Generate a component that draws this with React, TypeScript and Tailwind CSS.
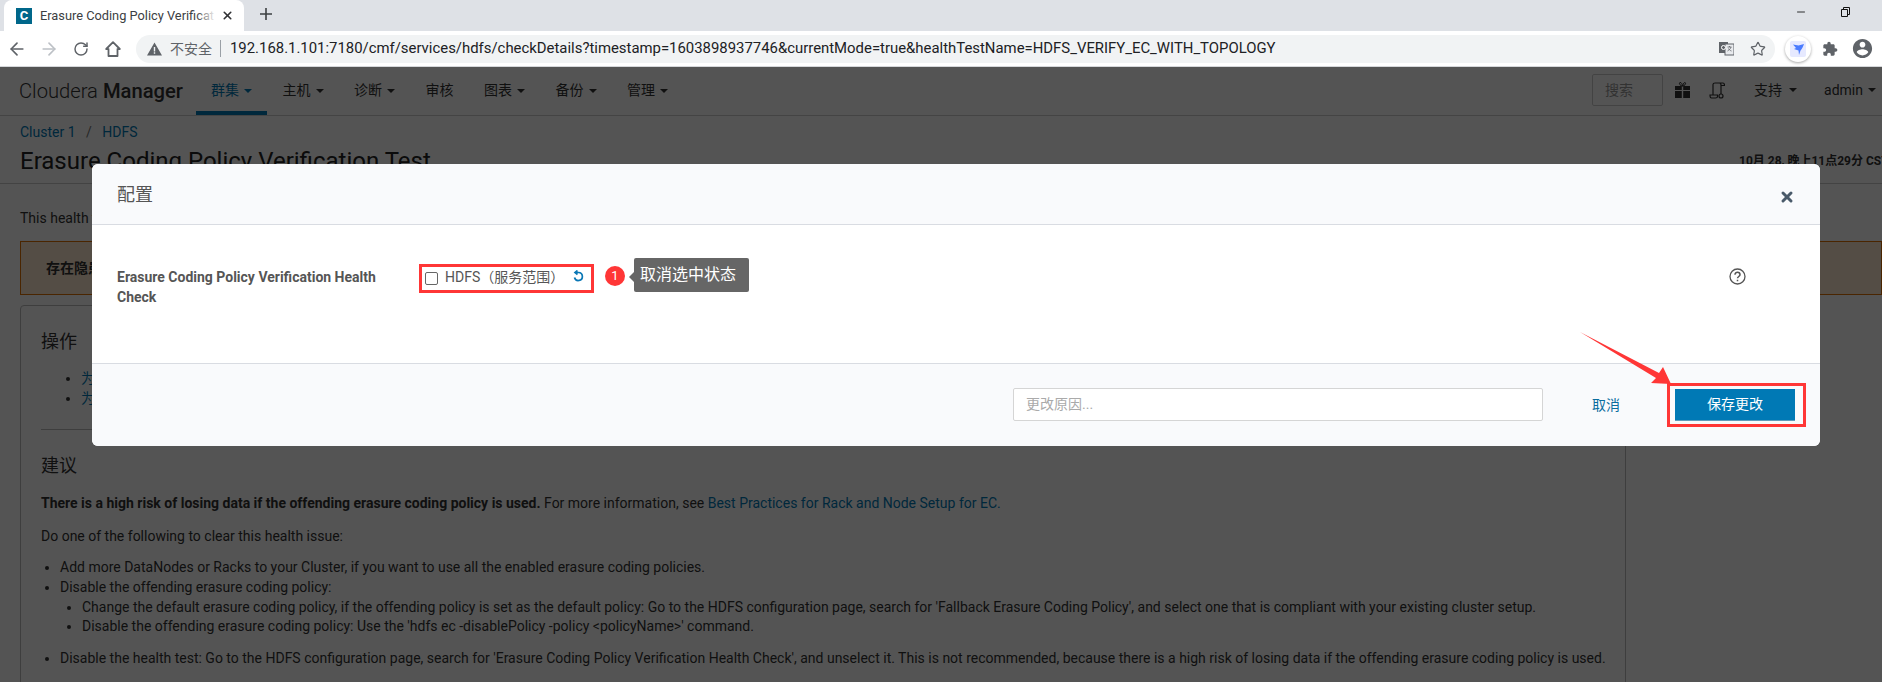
import { ArrowLeft, ArrowRight, RotateCw, Star, Minus, X } from 'lucide-react';

const navItems = [
  { label: '群集', active: true, caret: true },
  { label: '主机', caret: true },
  { label: '诊断', caret: true },
  { label: '审核', caret: false },
  { label: '图表', caret: true },
  { label: '备份', caret: true },
  { label: '管理', caret: true },
];

function Caret() {
  return <span className="ml-[5px] inline-block h-0 w-0 border-x-[4px] border-t-[4px] border-x-transparent border-t-current" />;
}

function TabStrip() {
  return (
    <div className="flex h-[31px] items-end bg-[#dee1e6] pl-[4px] text-[#3c4043]">
      <div className="flex h-[31px] w-[240px] items-center rounded-t-[8px] bg-white pl-[12px]">
        <span className="flex h-[16px] w-[16px] items-center justify-center bg-[#00678a] text-[13px] font-bold leading-none text-white">C</span>
        <div className="relative ml-[8px] w-[176px] overflow-hidden whitespace-nowrap text-[12.800px]">
          Erasure Coding Policy Verificat
          <span className="absolute inset-y-0 right-0 w-[20px] bg-gradient-to-r from-transparent to-white" />
        </div>
        <X size={13} strokeWidth={3} className="ml-[5px] text-[#303134]" />
      </div>
      <svg width="14" height="14" viewBox="0 0 14 14" className="mb-[10px] ml-[15px]">
        <path d="M7 1v12M1 7h12" stroke="#3c4043" strokeWidth="1.6" />
      </svg>
      <Minus size={12} strokeWidth={1.6} className="mb-[13px] ml-auto text-black" />
      <svg width="12" height="12" viewBox="0 0 12 12" fill="none" stroke="#111" className="mb-[13px] ml-[33px] mr-[30px]">
        <path d="M1.500 3.500h6v7h-6zM3.500 3.500v-2h6v7h-2" />
      </svg>
    </div>
  );
}

function Toolbar() {
  return (
    <div className="flex h-[36px] items-center border-b border-[#d5d7da] bg-white text-[#5f6368]">
      <div className="flex w-[136px] items-center pl-[1px]">
        <span className="flex w-[32px] justify-center"><ArrowLeft size={20} strokeWidth={2} /></span>
        <span className="flex w-[32px] justify-center text-[#bdc1c6]"><ArrowRight size={20} strokeWidth={2} /></span>
        <span className="flex w-[32px] justify-center"><RotateCw size={16} strokeWidth={2.2} /></span>
        <span className="flex w-[32px] justify-center">
          <svg width="18" height="18" viewBox="0 0 18 18" fill="none" stroke="#5f6368" strokeWidth="1.8">
            <path d="M9 2.200 2.200 9h2.300v7h9V9h2.300z" strokeLinejoin="round" />
          </svg>
        </span>
      </div>
      <div className="flex h-[28px] w-[1639px] items-center rounded-full bg-[#f1f3f4] pl-[11px] text-[14px]">
        <svg width="15" height="14" viewBox="0 0 15 14" fill="#5f6368">
          <path d="M7.500 0.500 15 13.500H0zM6.800 5v4.500h1.400V5zM6.800 10.300v1.400h1.400v-1.400z" fillRule="evenodd" />
        </svg>
        <span className="ml-[8px] w-[42px] font-['Noto_Sans_CJK_SC',sans-serif] text-[#5f6368]">不安全</span>
        <span className="ml-[8px] h-[17px] w-px bg-[#9aa0a6]" />
        <span className="ml-[9px] whitespace-nowrap text-[14.900px] text-[#202124]">192.168.1.101:7180/cmf/services/hdfs/checkDetails?timestamp=1603898937746&amp;currentMode=true&amp;healthTestName=HDFS_VERIFY_EC_WITH_TOPOLOGY</span>
        <svg width="15" height="15" viewBox="0 0 15 15" className="ml-auto">
          <rect x="0" y="1" width="9" height="11" fill="#5f6368" />
          <rect x="6" y="3" width="9" height="11" fill="#e8eaed" stroke="#5f6368" />
          <path d="M8.500 6h4M10.500 5v1M12 6c-.5 2-2 3-3.500 4M9.500 7.500c.5 1.200 1.500 2 3 2.500" stroke="#5f6368" fill="none" strokeWidth=".8" />
          <circle cx="4.500" cy="6.500" r="2" fill="none" stroke="#fff" />
        </svg>
        <Star size={16} strokeWidth={1.8} className="ml-[16px] mr-[9px] text-[#5f6368]" />
      </div>
      <span className="ml-[10px] flex h-[26px] w-[26px] items-center justify-center rounded-full bg-white shadow-[0_1px_3px_rgba(0,0,0,0.35)]">
        <svg width="16" height="16" viewBox="0 0 16 16">
          <rect width="16" height="16" rx="2" fill="#e6e9ff" />
          <path d="M14 3 8.500 4.500 3 3.500l3 3.500-2 1 4.500 1.500L9 14l1.500-4.500C12 8 13 6 14 3z" fill="#4a7bff" />
        </svg>
      </span>
      <svg width="16" height="16" viewBox="0 0 24 24" fill="#5f6368" className="ml-[11px]">
        <path d="M20.500 11H19V7c0-1.100-.9-2-2-2h-4V3.500C13 2.120 11.880 1 10.500 1S8 2.120 8 3.500V5H4c-1.100 0-1.990.9-1.990 2v3.800H3.500c1.490 0 2.700 1.210 2.700 2.700s-1.210 2.700-2.700 2.700H2V20c0 1.100.9 2 2 2h3.800v-1.500c0-1.490 1.210-2.700 2.700-2.700 1.490 0 2.700 1.210 2.700 2.700V22H17c1.100 0 2-.9 2-2v-4h1.500c1.380 0 2.500-1.120 2.500-2.500S21.880 11 20.500 11z" />
      </svg>
      <svg width="23" height="23" viewBox="0 0 24 24" fill="#5f6368" className="ml-[13px]">
        <path d="M12 2C6.480 2 2 6.480 2 12s4.480 10 10 10 10-4.480 10-10S17.520 2 12 2zm0 3c1.660 0 3 1.340 3 3s-1.340 3-3 3-3-1.340-3-3 1.340-3 3-3zm0 14.200c-2.500 0-4.710-1.280-6-3.220.03-1.990 4-3.080 6-3.080 1.990 0 5.970 1.090 6 3.080-1.290 1.940-3.500 3.220-6 3.220z" />
      </svg>
    </div>
  );
}

function TopNav() {
  return (
    <div className="flex h-[49px] items-stretch border-b border-[#cfcfcf] bg-white pl-[19px] text-[#333]">
      <div className="flex w-[177px] items-center whitespace-nowrap text-[20.200px] font-light">
        Cloudera<span className="ml-[5px] font-medium">Manager</span>
      </div>
      {navItems.map((item) => (
        <div
          key={item.label}
          className={`mr-[0.5px] flex items-center border-b-[4px] px-[15px] pt-[3px] text-[14px] ${item.active ? 'border-[#0079b5] text-[#0079b5]' : 'border-transparent'}`}
        >
          {item.label}
          {item.caret && <Caret />}
        </div>
      ))}
      <div className="ml-auto flex items-center pb-[2px] text-[14px]">
        <div className="flex h-[32px] w-[71px] items-center rounded-[2px] border border-[#ccc] pl-[12px] text-[#999]">搜索</div>
        <svg width="15" height="16" viewBox="0 0 15 16" fill="#333" className="ml-[12px]">
          <path d="M0 4h6.800v4H0zM8.200 4H15v4H8.200zM0 9h6.800v7H0zM8.200 9H15v7H8.200z" />
          <path d="M7.500 4C5 4 3.500 1 5 .5S7.500 3 7.500 4s1-4 2.500-3.500S10 4 7.500 4z" fill="none" stroke="#333" />
        </svg>
        <svg width="16" height="17" viewBox="0 0 16 17" fill="none" stroke="#333" strokeWidth="1.200" className="ml-[19px]">
          <path d="M4 13V2.500C4 1.500 5 1 6 1h8c1 0 1.500 1 1.500 2.500H12M12 12V3c0-1-.5-2-2-2M1 13h7.500v1.500c0 1-1 1.500-2 1.500H2.500C1.500 16 1 15 1 13z" />
          <circle cx="12" cy="14" r="2" />
        </svg>
        <span className="ml-[29px] flex items-center">支持<span className="ml-[2px] flex"><Caret /></span></span>
        <span className="ml-[27px] mr-[6px] flex items-center">admin<Caret /></span>
      </div>
    </div>
  );
}

function PageBody() {
  return (
    <div className="text-[14px] text-[#333]">
      <div className="flex h-[68px] flex-col border-b border-[#ccc] px-[20px] pt-[7px]">
        <div className="flex h-[18px] items-center text-[#0079b5]">
          Cluster 1<span className="mx-[10.500px] text-[#777]">/</span>HDFS
        </div>
        <div className="flex items-start justify-between">
          <h1 className="mt-[4px] text-[24px] leading-[32px] text-[#222]">Erasure Coding Policy Verification Test</h1>
          <span className="mr-[-20px] mt-[12px] w-[143px] overflow-hidden whitespace-nowrap text-[12px] font-bold leading-[16px]">10月 28, 晚上11点29分 CST</span>
        </div>
      </div>
      <p className="ml-[20px] mt-[25px] leading-[18px]">This health test checks the erasure coding policy.</p>
      <div className="ml-[20px] mt-[14px] flex h-[54px] items-center border border-[#e07000] bg-[#ffe8d2] pl-[25px] font-bold">
        存在隐患
      </div>
      <div className="ml-[20px] mt-[10px] h-[400px] w-[1606px] rounded-t-[4px] border border-[#bbb] px-[20px] pt-[24px]">
        <h2 className="text-[18px] leading-[24px]">操作</h2>
        <ul className="ml-[40px] mt-[15px] list-disc leading-[19.500px] text-[#0079b5] marker:text-[#333]">
          <li>为此服务禁用运行状况测试</li>
          <li>为此服务配置运行状况测试</li>
        </ul>
        <hr className="mt-[21px] border-[#bbb]" />
        <h2 className="mt-[24px] text-[18px] leading-[24px]">建议</h2>
        <p className="mt-[15px] leading-[20px]">
          <b>There is a high risk of losing data if the offending erasure coding policy is used.</b> For more information, see{' '}
          <span className="text-[#0079b5]">Best Practices for Rack and Node Setup for EC.</span>
        </p>
        <p className="mt-[13px] leading-[20px]">Do one of the following to clear this health issue:</p>
        <ul className="ml-[19px] mt-[12px] list-disc leading-[19.800px]">
          <li>Add more DataNodes or Racks to your Cluster, if you want to use all the enabled erasure coding policies.</li>
          <li>
            Disable the offending erasure coding policy:
            <ul className="ml-[22px] list-disc">
              <li>Change the default erasure coding policy, if the offending policy is set as the default policy: Go to the HDFS configuration page, search for 'Fallback Erasure Coding Policy', and select one that is compliant with your existing cluster setup.</li>
              <li>Disable the offending erasure coding policy: Use the 'hdfs ec -disablePolicy -policy &lt;policyName&gt;' command.</li>
            </ul>
          </li>
          <li className="mt-[12px] whitespace-nowrap">Disable the health test: Go to the HDFS configuration page, search for 'Erasure Coding Policy Verification Health Check', and unselect it. This is not recommended, because there is a high risk of losing data if the offending erasure coding policy is used.</li>
        </ul>
      </div>
    </div>
  );
}

function ConfigModal() {
  return (
    <div className="absolute left-[92px] top-[97px] flex h-[282px] w-[1728px] flex-col overflow-hidden rounded-[6px] bg-white text-[14px] text-[#333]">
      <div className="flex h-[61px] items-center justify-between border-b border-[#d9dce2] bg-[#f9fafc] pl-[25px] pr-[25px]">
        <span className="text-[18px] text-[#555]">配置</span>
        <X size={16} strokeWidth={4.500} className="mt-[6px] text-[#4a5a6a]" />
      </div>
      <div className="flex flex-1 items-start pl-[25px] pr-[74px] pt-[39px]">
        <div className="mt-[3px] w-[302px] font-bold leading-[20px] text-[#555]">
          Erasure Coding Policy Verification Health
          <br />
          Check
        </div>
        <div className="flex h-[29px] w-[175px] items-center border-[3px] border-[#ff3636] pl-[3px] text-[#555]">
          <span className="h-[13px] w-[13px] rounded-[2px] border border-[#666] bg-white" />
          <span className="mb-[2px] ml-[7px] whitespace-nowrap">HDFS（服务范围）</span>
          <svg width="13" height="13" viewBox="0 0 13 13" fill="none" stroke="#0a77b5" strokeWidth="1.700" className="mb-[5px] ml-[8px]">
            <path d="M3.500 2.500h3a4 4 0 1 1-4 5" />
            <path d="M5.500 .5 3 2.500l2.500 2" />
          </svg>
        </div>
        <span className="ml-[11px] mt-[2px] flex h-[20px] w-[20px] items-center justify-center rounded-full bg-[#ff3636] text-[13px] text-white">1</span>
        <span className="ml-[4px] mt-[8px] h-0 w-0 border-y-[5px] border-r-[5px] border-y-transparent border-r-[#666]" />
        <span className="mt-[-6px] flex h-[34px] w-[115px] items-center rounded-[2px] bg-[#666] pl-[6px] text-[16px] text-white">取消选中状态</span>
        <svg width="17" height="17" viewBox="0 0 17 17" fill="none" stroke="#555" strokeWidth="1.300" className="ml-auto mt-[4px]">
          <circle cx="8.500" cy="8.500" r="7.500" />
          <path d="M6 6.700c0-3.400 5-3.200 5 0 0 1.800-2.500 1.800-2.500 3.600M8.500 11.800v1.500" strokeWidth="1.500" />
        </svg>
      </div>
      <div className="flex h-[83px] items-center border-t border-[#d9dce2] bg-[#f9fafc] pl-[921px]">
        <div className="mb-[2px] flex h-[33px] w-[530px] items-center rounded-[2px] border border-[#d5d5d5] bg-white pl-[12px] text-[#aaa]">更改原因...</div>
        <span className="ml-[49px] text-[#0a6d9e]">取消</span>
        <div className="ml-[47px] flex h-[44px] w-[139px] items-center border-[3px] border-[#ff3636] pl-[5px]">
          <span className="flex h-[32px] w-[120px] items-center justify-center border-b border-[#5f9dbd] bg-[#0079b5] text-white">保存更改</span>
        </div>
      </div>
    </div>
  );
}

export default function App() {
  return (
    <div className="relative flex h-[682px] w-[1882px] flex-col overflow-hidden bg-white font-['Roboto','Noto_Sans_CJK_SC',sans-serif]">
      <TabStrip />
      <Toolbar />
      <div className="relative flex-1 overflow-hidden">
        <TopNav />
        <PageBody />
        <div className="absolute inset-0 bg-black/[0.67]" />
        <ConfigModal />
        <svg width="100" height="60" viewBox="1575 328 100 60" className="absolute left-[1575px] top-[261px]">
          <path d="M1580 332 1659 373 1663 367 1671 384 1651 383 1656 378z" fill="#ff3636" />
        </svg>
      </div>
    </div>
  );
}
